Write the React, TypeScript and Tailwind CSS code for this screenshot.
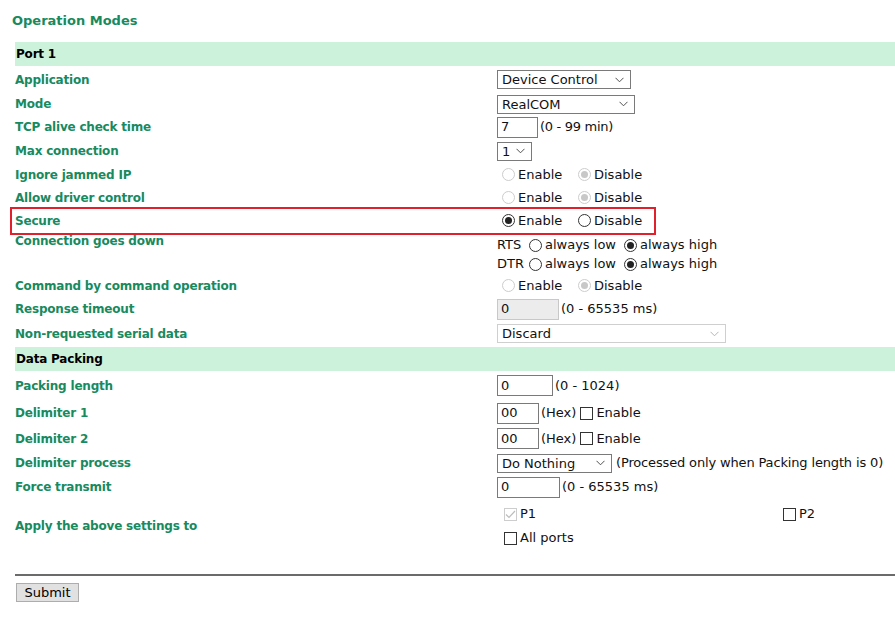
import React from 'react';

const LABEL = 'text-[#188a60] font-bold text-[12px] tracking-[-0.2px]';

function Chevron({ light = false }: { light?: boolean }) {
  return (
    <svg width="9" height="6" viewBox="0 0 9 6" className="shrink-0">
      <path d="M0.5 0.8 L4.5 4.8 L8.5 0.8" fill="none" stroke={light ? '#b5b5b5' : '#505050'} strokeWidth="1" />
    </svg>
  );
}

function Select({ value, w, disabled = false }: { value: string; w: string; disabled?: boolean }) {
  return (
    <div
      className={`${w} h-[19px] flex items-center justify-between pl-[4px] pr-[6px] border bg-white ${
        disabled ? 'border-[#cfcfcf]' : 'border-[#7a7a7a]'
      }`}
    >
      <span className="leading-none">{value}</span>
      <Chevron light={disabled} />
    </div>
  );
}

function Input({ value, w, disabled = false }: { value: string; w: string; disabled?: boolean }) {
  return (
    <div
      className={`${w} h-[21px] flex items-center pl-[3px] border ${
        disabled ? 'border-[#c8c8c8] bg-[#ececec]' : 'border-[#7a7a7a] bg-white'
      }`}
    >
      {value}
    </div>
  );
}

function Radio({ checked = false, disabled = false }: { checked?: boolean; disabled?: boolean }) {
  return (
    <span
      className={`w-[13px] h-[13px] rounded-full border flex items-center justify-center shrink-0 bg-white ${
        disabled ? 'border-[#cdcdcd]' : 'border-[#333]'
      }`}
    >
      {checked && <span className={`w-[7px] h-[7px] rounded-full ${disabled ? 'bg-[#c8c8c8]' : 'bg-[#222]'}`} />}
    </span>
  );
}

function Check({ checked = false, disabled = false }: { checked?: boolean; disabled?: boolean }) {
  return (
    <span
      className={`w-[13px] h-[13px] border flex items-center justify-center shrink-0 bg-white ${
        disabled ? 'border-[#cdcdcd]' : 'border-[#333]'
      }`}
    >
      {checked && (
        <svg width="11" height="9" viewBox="0 0 11 9">
          <path d="M1 4.5 L4 7.5 L10 1" fill="none" stroke="#bdbdbd" strokeWidth="1.2" />
        </svg>
      )}
    </span>
  );
}

function EnableDisable({ enable, disabled = false }: { enable: boolean; disabled?: boolean }) {
  return (
    <div className="flex items-center pl-[5px]">
      <Radio checked={enable} disabled={disabled} />
      <span className="ml-[3px] w-[60px]">Enable</span>
      <Radio checked={!enable} disabled={disabled} />
      <span className="ml-[3px]">Disable</span>
    </div>
  );
}

function Row({ label, h, children, top = false }: { label: string; h: string; children?: React.ReactNode; top?: boolean }) {
  return (
    <div className={`flex ${h}`}>
      <div className={`w-[482px] shrink-0 flex ${top ? 'items-start' : 'items-center'} ${LABEL}`}>{label}</div>
      <div className="flex-1 flex flex-col justify-center">{children}</div>
    </div>
  );
}

function Header({ title }: { title: string }) {
  return (
    <div className="h-[24px] bg-[#cdf2dc] flex items-center pl-[1px] font-bold text-[12px] tracking-[-0.2px] text-black">
      {title}
    </div>
  );
}

export default function App() {
  return (
    <div className="relative w-[895px] h-[617px] bg-white text-[13px] text-[#111] font-['DejaVu_Sans',sans-serif] overflow-hidden">
      <div className="pl-[12px] pt-[11px] h-[42px] text-[#188a60] font-bold text-[13px]">Operation Modes</div>
      <div className="pl-[15px]">
        <Header title="Port 1" />
        <Row label="Application" h="h-[27px]">
          <Select value="Device Control" w="w-[134px]" />
        </Row>
        <Row label="Mode" h="h-[22px]">
          <Select value="RealCOM" w="w-[138px]" />
        </Row>
        <Row label="TCP alive check time" h="h-[24px]">
          <div className="flex items-center">
            <Input value="7" w="w-[41px]" />
            <span className="ml-[2px] tracking-[-0.3px]">(0 - 99 min)</span>
          </div>
        </Row>
        <Row label="Max connection" h="h-[24px]">
          <Select value="1" w="w-[35px]" />
        </Row>
        <Row label="Ignore jammed IP" h="h-[23px]">
          <EnableDisable enable={false} disabled />
        </Row>
        <Row label="Allow driver control" h="h-[23px]">
          <EnableDisable enable={false} disabled />
        </Row>
        <Row label="Secure" h="h-[23px]">
          <EnableDisable enable />
        </Row>
        <Row label="Connection goes down" h="h-[42px]" top>
          <div className="flex flex-col pt-[3px]">
            {['RTS', 'DTR'].map((s) => (
              <div key={s} className="flex items-center h-[19px]">
                <span className="w-[32px]">{s}</span>
                <Radio />
                <span className="ml-[3px] w-[79px]">always low</span>
                <Radio checked />
                <span className="ml-[3px]">always high</span>
              </div>
            ))}
          </div>
        </Row>
        <Row label="Command by command operation" h="h-[23px]">
          <EnableDisable enable={false} disabled />
        </Row>
        <Row label="Response timeout" h="h-[24px]">
          <div className="flex items-center">
            <Input value="0" w="w-[62px]" disabled />
            <span className="ml-[2px]">(0 - 65535 ms)</span>
          </div>
        </Row>
        <Row label="Non-requested serial data" h="h-[25px]">
          <Select value="Discard" w="w-[229px]" disabled />
        </Row>
        <div className="mt-[1px]">
          <Header title="Data Packing" />
        </div>
        <Row label="Packing length" h="h-[29px]">
          <div className="flex items-center">
            <Input value="0" w="w-[56px]" />
            <span className="ml-[2px]">(0 - 1024)</span>
          </div>
        </Row>
        <Row label="Delimiter 1" h="h-[26px]">
          <div className="flex items-center">
            <Input value="00" w="w-[42px]" />
            <span className="ml-[2px]">(Hex)</span>
            <span className="ml-[4px]"><Check /></span>
            <span className="ml-[3px]">Enable</span>
          </div>
        </Row>
        <Row label="Delimiter 2" h="h-[25px]">
          <div className="flex items-center">
            <Input value="00" w="w-[42px]" />
            <span className="ml-[2px]">(Hex)</span>
            <span className="ml-[4px]"><Check /></span>
            <span className="ml-[3px]">Enable</span>
          </div>
        </Row>
        <Row label="Delimiter process" h="h-[24px]">
          <div className="flex items-center">
            <Select value="Do Nothing" w="w-[115px]" />
            <span className="ml-[4px] tracking-[-0.15px]">(Processed only when Packing length is 0)</span>
          </div>
        </Row>
        <Row label="Force transmit" h="h-[24px]">
          <div className="flex items-center">
            <Input value="0" w="w-[63px]" />
            <span className="ml-[2px]">(0 - 65535 ms)</span>
          </div>
        </Row>
        <Row label="Apply the above settings to" h="h-[54px]">
          <div className="flex flex-col gap-[5px] pl-[7px]">
            <div className="flex items-center h-[19px]">
              <div className="w-[279px] flex items-center">
                <Check checked disabled />
                <span className="ml-[3px]">P1</span>
              </div>
              <Check />
              <span className="ml-[3px]">P2</span>
            </div>
            <div className="flex items-center h-[19px]">
              <Check />
              <span className="ml-[3px]">All ports</span>
            </div>
          </div>
        </Row>
        <div className="mt-[21px] h-[2px] bg-[#6b6b6b]" />
        <div className="mt-[7px] pl-[1px]">
          <button className="w-[63px] h-[19px] bg-[#e1e1e1] border border-[#adadad] text-[13px] text-black leading-none">
            Submit
          </button>
        </div>
      </div>
      <div className="absolute left-[10px] top-[207px] w-[646px] h-[28px] border-2 border-[#e0202b] pointer-events-none" />
    </div>
  );
}
